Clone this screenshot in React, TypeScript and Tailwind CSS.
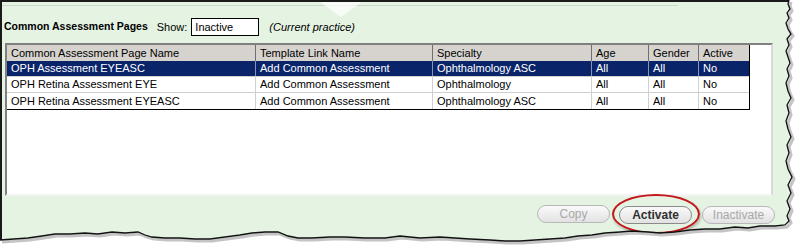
import React from 'react';

const cols = [
  { name: 'Common Assessment Page Name', w: 'w-[249px]' },
  { name: 'Template Link Name', w: 'w-[177px]' },
  { name: 'Specialty', w: 'w-[159px]' },
  { name: 'Age', w: 'w-[57px]' },
  { name: 'Gender', w: 'w-[50px]' },
  { name: 'Active', w: 'w-[50px]' },
];

const rows = [
  ['OPH Assessment EYEASC', 'Add Common Assessment', 'Ophthalmology ASC', 'All', 'All', 'No'],
  ['OPH Retina Assessment EYE', 'Add Common Assessment', 'Ophthalmology', 'All', 'All', 'No'],
  ['OPH Retina Assessment EYEASC', 'Add Common Assessment', 'Ophthalmology ASC', 'All', 'All', 'No'],
];

// torn paper edge, right side then bottom
const right = '789,0 788,4 790,9 787,13 789,18 786,23 788,29 791,34 787,39 789,45 786,51 788,57 790,63 787,69 789,76 786,83 788,91 791,98 787,105 789,113 786,121 788,129 791,137 787,145 789,153 786,161 788,169 792,177 788,185 791,193 787,201 790,209 787,216 789,221 785,225';
const bottom = '785,225 775,226 760,226 748,228 735,227 720,229 705,229 690,230 675,232 660,233 648,232 632,231 620,232 605,233 592,235 578,236 565,238 550,239 535,240 520,241 505,241 490,240 470,239 455,238 440,237 420,238 400,236 385,238 365,238 345,237 330,237 312,238 298,238 288,236 278,232 265,232 252,233 240,235 225,237 210,239 195,239 180,238 165,238 152,237 145,235 138,232 125,233 112,232 98,234 85,233 70,234 55,234 42,236 28,238 14,239 0,240';

function Torn() {
  const line = `M ${right.split(' ').join(' L ')} L ${bottom.split(' ').slice(1).join(' L ')}`;
  const outside = `M 799,0 L ${right.split(' ').join(' L ')} L ${bottom.split(' ').slice(1).join(' L ')} L 0,247 L 799,247 Z`;
  return (
    <svg className="absolute left-0 top-0 pointer-events-none" width="799" height="247" viewBox="0 0 799 247">
      <path d={outside} fill="#ffffff" />
      <path d={line} fill="none" stroke="#8a8a8a" strokeWidth="3" opacity="0.5" transform="translate(2,2)" />
      <path d={line} fill="none" stroke="#111" strokeWidth="1.3" />
    </svg>
  );
}

function Btn({ label, active }: { label: string; active?: boolean }) {
  return (
    <button
      className={
        'w-[73px] h-[18px] rounded-full border text-[12px] leading-none bg-gradient-to-b from-[#fafafa] to-[#e2e2e2] ' +
        (active ? 'border-[#8a8a8a] text-[#303030] font-bold' : 'border-[#b8b8b8] text-[#a8a8a8]')
      }
    >
      {label}
    </button>
  );
}

export default function App() {
  return (
    <div className="relative w-[799px] h-[247px] bg-white overflow-hidden font-['Liberation_Sans',Arial,sans-serif]">
      <div className="relative w-[794px] h-[242px] bg-[#e4f3e2] border-l-2 border-t-2 border-[#1a1a1a] flex flex-col">
        <div className="absolute left-0 top-[3px] w-[676px] h-px bg-[#cfd8cf]" />
        <svg className="absolute left-[318px] top-0" width="42" height="16" viewBox="0 0 42 16">
          <path d="M0,0 L42,0 L21,15 Z" fill="#ffffff" opacity="0.7" />
        </svg>

        <div className="mt-[16px] ml-[2px] h-[18px] flex items-center text-[11px] text-black">
          <span className="font-bold text-[10.5px]">Common Assessment Pages</span>
          <span className="ml-[9px]">Show:</span>
          <div className="ml-[4px] w-[68px] h-[18px] bg-white border border-black flex items-center pl-[3px]">Inactive</div>
          <span className="ml-[10px] italic">(Current practice)</span>
        </div>

        <div className="mt-[7px] ml-[3px] w-[768px] h-[153px] border-2 border-t-[#808080] border-l-[#808080] border-b-[#f4f4f4] border-r-[#d8d8d8] bg-white">
          <div className="w-[743px] border-r border-b border-black text-[11px]">
            <div className="flex h-[16px] bg-[#d6d3ce] text-black">
              {cols.map((c, i) => (
                <div key={c.name} className={`${c.w} h-full flex items-center pl-[4px] ${i < cols.length - 1 ? 'border-r border-[#6f6f6f]' : ''}`}>
                  {c.name}
                </div>
              ))}
            </div>
            {rows.map((r, ri) => (
              <div key={ri} className={`flex h-[16px] ${ri === 0 ? 'bg-[#0a246a] text-white' : 'bg-white text-black'} ${ri < rows.length - 1 ? 'border-b border-[#d0d0d0]' : ''}`}>
                {r.map((v, ci) => (
                  <div key={ci} className={`${cols[ci].w} h-full flex items-center pl-[4px] ${ci < cols.length - 1 ? (ri === 0 ? 'border-r border-[#8a95b5]' : 'border-r border-[#d0d0d0]') : ''}`}>
                    {v}
                  </div>
                ))}
              </div>
            ))}
          </div>
        </div>

        <div className="mt-[6px] w-[773px] flex justify-end items-center">
          <Btn label="Copy" />
          <div className="relative ml-[9px]">
            <Btn label="Activate" active />
            <span className="absolute -left-[7px] -right-[8px] -top-[8px] -bottom-[8px] rounded-[50%] border-2 border-[#c4161c] shadow-[1px_2px_3px_rgba(0,0,0,0.25)]" />
          </div>
          <div className="ml-[10px]">
            <Btn label="Inactivate" />
          </div>
        </div>
      </div>
      <Torn />
    </div>
  );
}
